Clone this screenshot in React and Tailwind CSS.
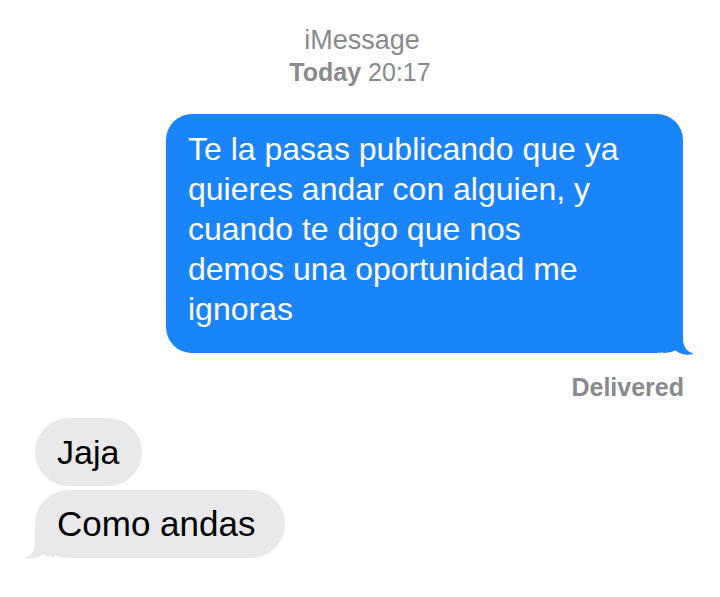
import React from "react"

const BLUE = "#1a84fb"
const GRAY = "#e9e9eb"

function TailRight() {
  return (
    <svg
      width="34"
      height="34"
      viewBox="0 0 34 34"
      className="absolute right-[-14px] bottom-[-3px]"
    >
      <path
        d="M4 0 H20 V15 C20 25 23 29 31 32 C23 34 17 32 12.5 28.5 C9 30 5 31 0 31 V0 Z"
        fill={BLUE}
      />
    </svg>
  )
}

function TailLeft() {
  return (
    <svg
      width="34"
      height="34"
      viewBox="0 0 34 34"
      className="absolute left-[-14px] bottom-[-2px]"
    >
      <path
        d="M30 0 H14 V15 C14 25 11 29 3 32 C11 34 17 32 21.5 28.5 C25 30 29 31 34 31 V0 Z"
        fill={GRAY}
      />
    </svg>
  )
}

export default function App() {
  return (
    <div className="w-[720px] h-[597px] bg-white overflow-hidden flex flex-col font-['Liberation_Sans',Arial,sans-serif]">
      {/* header */}
      <div className="flex flex-col items-center pt-[25px] gap-[2px] leading-[30px] text-[#8a8a8e]">
        <p className="text-[27px] ml-[4px]">iMessage</p>
        <p className="text-[25px]">
          <span className="font-bold">Today</span> 20:17
        </p>
      </div>

      {/* sent */}
      <div className="self-end mr-[37px] mt-[27px] relative">
        <div
          className="w-[517px] rounded-[26px] pl-[22px] pr-[14px] pt-[15px] pb-[24px] text-white text-[32px] leading-[40px]"
          style={{ backgroundColor: BLUE }}
        >
          Te la pasas publicando que ya
          <br />
          quieres andar con alguien, y
          <br />
          cuando te digo que nos
          <br />
          demos una oportunidad me
          <br />
          ignoras
        </div>
        <TailRight />
      </div>

      <p className="self-end mr-[36px] mt-[19px] text-[25px] leading-[30px] font-bold text-[#8a8a8e]">
        Delivered
      </p>

      {/* received */}
      <div className="flex flex-col items-start gap-[4px] ml-[35px] mt-[16px]">
        <div className="w-[107px] rounded-[34px] pl-[22px] py-[13px] text-[34px] leading-[42px] text-black bg-[#e9e9eb]">
          Jaja
        </div>
        <div className="relative">
          <div className="w-[250px] rounded-[34px] pl-[22px] py-[13px] text-[35px] leading-[42px] text-black bg-[#e9e9eb]">
            Como andas
          </div>
          <TailLeft />
        </div>
      </div>
    </div>
  )
}
